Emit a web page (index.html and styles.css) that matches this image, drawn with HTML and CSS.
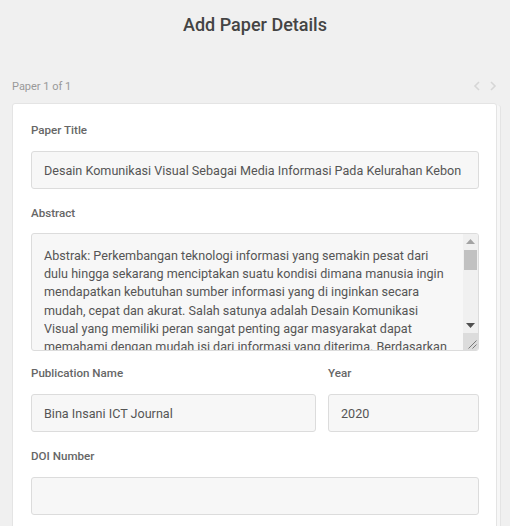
FILE: index.html
```html
<!DOCTYPE html>
<html lang="en">
<head>
    <meta charset="UTF-8">
    <meta name="viewport" content="width=device-width, initial-scale=1.0">
    <title>Add Paper Details</title>
    <link rel="stylesheet" href="styles.css">
</head>
<body>
    <h1>Add Paper Details</h1>
    <div class="pager">
        <span class="pager-count">Paper 1 of 1</span>
        <div class="pager-nav">
            <svg width="8" height="10" viewBox="0 0 8 10"><path d="M6 1 L2 5 L6 9" fill="none" stroke="#d6d6d6" stroke-width="1.6"/></svg>
            <svg width="8" height="10" viewBox="0 0 8 10"><path d="M2 1 L6 5 L2 9" fill="none" stroke="#d6d6d6" stroke-width="1.6"/></svg>
        </div>
    </div>
    <div class="card">
        <div class="field">
            <label>Paper Title</label>
            <input type="text" value="Desain Komunikasi Visual Sebagai Media Informasi Pada Kelurahan Kebon">
        </div>
        <div class="field field-tall">
            <label>Abstract</label>
            <div class="textbox">
                <textarea>Abstrak: Perkembangan teknologi informasi yang semakin pesat dari dulu hingga sekarang menciptakan suatu kondisi dimana manusia ingin mendapatkan kebutuhan sumber informasi yang di inginkan secara mudah, cepat dan akurat. Salah satunya adalah Desain Komunikasi Visual yang memiliki peran sangat penting agar masyarakat dapat memahami dengan mudah isi dari informasi yang diterima. Berdasarkan hal tersebut, penulis merancang media informasi pada Kelurahan Kebon Jeruk agar informasi dapat tersampaikan dengan baik kepada masyarakat.</textarea>
                <div class="scrollbar">
                    <div class="sb-btn">
                        <svg width="9" height="5" viewBox="0 0 9 5"><path d="M0 5 L4.5 0 L9 5 Z" fill="#a3a3a3"/></svg>
                    </div>
                    <div class="sb-thumb"></div>
                    <div class="sb-track"></div>
                    <div class="sb-btn">
                        <svg width="9" height="5" viewBox="0 0 9 5"><path d="M0 0 L9 0 L4.5 5 Z" fill="#505050"/></svg>
                    </div>
                    <div class="sb-corner">
                        <svg width="15" height="17" viewBox="0 0 15 17"><path d="M13.5 7.5 L5.5 15.5 M13.5 11.5 L9.5 15.5" stroke="#7a7a7a" stroke-width="1"/></svg>
                    </div>
                </div>
            </div>
        </div>
        <div class="row">
            <div class="field grow">
                <label>Publication Name</label>
                <input type="text" value="Bina Insani ICT Journal">
            </div>
            <div class="field year">
                <label>Year</label>
                <input type="text" value="2020">
            </div>
        </div>
        <div class="field">
            <label>DOI Number</label>
            <input type="text" value="">
        </div>
    </div>
</body>
</html>
```
FILE: styles.css
```css
html, body {
    margin: 0;
    padding: 0;
    height: 100%;
    overflow: hidden;
}
body {
    font-family: Roboto, "Liberation Sans", Arial, sans-serif;
    background-color: #f0f0f0;
    color: #555;
}
h1 {
    margin: 0;
    padding-top: 14px;
    font-size: 18px;
    line-height: 22px;
    font-weight: 500;
    color: #444;
    text-align: center;
}
.pager {
    display: flex;
    justify-content: space-between;
    align-items: center;
    margin: 42px 12px 0 12px;
    height: 16px;
}
.pager-count {
    font-size: 11px;
    color: #999;
}
.pager-nav {
    display: flex;
    gap: 8px;
    margin-right: 1px;
}
.card {
    box-sizing: border-box;
    width: 485px;
    margin: 9px 0 0 12px;
    background-color: white;
    border: 1px solid #e4e4e4;
    border-radius: 3px;
    padding: 19px 17px 0 18px;
    box-shadow: 3px 2px 0 0 #f7f7f7, 4px 2px 0 0 #e4e4e4;
}
.field {
    margin-bottom: 17px;
}
.field-tall {
    margin-bottom: 15px;
}
label {
    display: block;
    font-size: 11.6px;
    line-height: 15px;
    font-weight: 500;
    color: #666;
    margin-bottom: 13px;
}
.field-tall label {
    margin-bottom: 12px;
}
input, .textbox {
    box-sizing: border-box;
    width: 100%;
    background-color: #f7f7f7;
    border: 1px solid #dcdcdc;
    border-radius: 3px;
}
input, textarea {
    display: block;
    font-family: Roboto, "Liberation Sans", Arial, sans-serif;
    font-size: 12.6px;
    color: #555;
    outline: none;
}
input {
    height: 38px;
    padding: 0 12px;
}
.textbox {
    display: flex;
    height: 118px;
    overflow: hidden;
}
textarea {
    flex: 1;
    margin: 0;
    border: none;
    background: transparent;
    padding: 13px 14px 0 12px;
    line-height: 18.2px;
    overflow: hidden;
    resize: none;
}
.scrollbar {
    display: flex;
    flex-direction: column;
    width: 15px;
    background-color: #f0f0f0;
}
.sb-btn {
    height: 15px;
    display: flex;
    align-items: center;
    justify-content: center;
}
.sb-thumb {
    height: 20px;
    margin: 1px 1px 0 1px;
    background-color: #c1c1c1;
}
.sb-track {
    flex: 1;
}
.sb-corner {
    height: 17px;
    background-color: #dcdcdc;
}
.sb-corner svg {
    display: block;
}
.row {
    display: flex;
    gap: 12px;
}
.grow {
    flex: 1;
}
.year {
    flex: 0 0 151px;
}
```
